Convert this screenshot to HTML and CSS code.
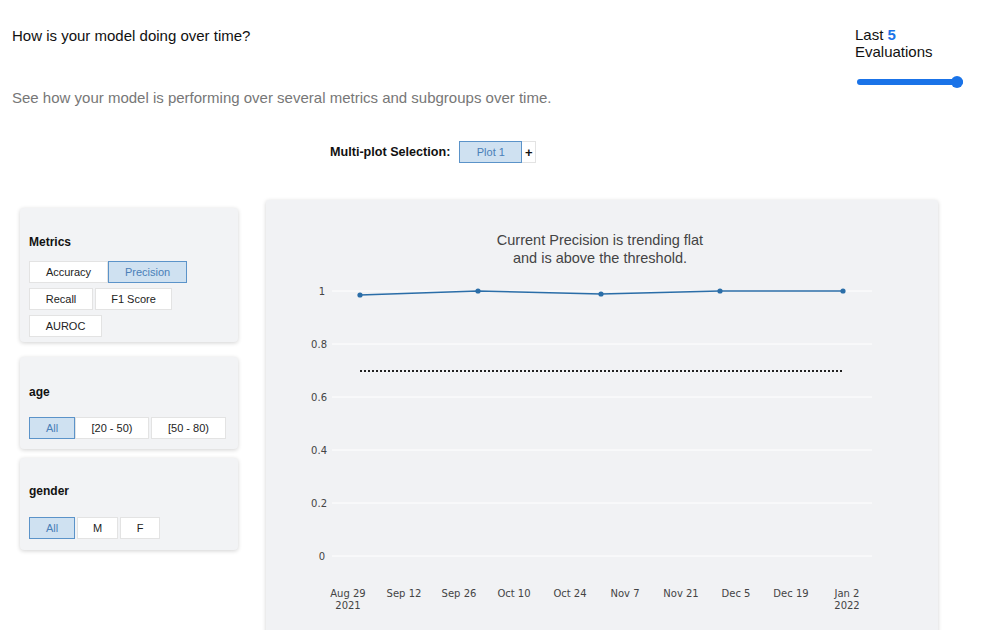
FILE: index.html
```html
<!DOCTYPE html>
<html>
<head>
<meta charset="utf-8">
<link rel="stylesheet" href="styles.css">
</head>
<body>
<div class="header">
  <div class="titles">
    <h1 class="title">How is your model doing over time?</h1>
    <p class="subtitle">See how your model is performing over several metrics and subgroups over time.</p>
  </div>
  <div class="evals">
    <div class="evals-label">Last <span class="num">5</span><br>Evaluations</div>
    <div class="slider"><div class="track"></div><div class="knob"></div></div>
  </div>
</div>
<div class="multiplot">
  <span class="mp-label">Multi-plot Selection:</span>
  <button class="btn sel plot">Plot 1</button><button class="btn plus">+</button>
</div>
<div class="main">
  <div class="side">
    <div class="card metrics">
      <div class="card-title">Metrics</div>
      <div class="btn-rows">
        <div class="row"><button class="btn w79">Accuracy</button><button class="btn sel w79">Precision</button></div>
        <div class="row gap2"><button class="btn w64">Recall</button><button class="btn w77">F1 Score</button></div>
        <div class="row"><button class="btn w73">AUROC</button></div>
      </div>
    </div>
    <div class="card group age">
      <div class="card-title">age</div>
      <div class="row"><button class="btn sel w46">All</button><button class="btn w74">[20 - 50)</button><button class="btn w75 ml2">[50 - 80)</button></div>
    </div>
    <div class="card group gender">
      <div class="card-title">gender</div>
      <div class="row"><button class="btn sel w46">All</button><button class="btn w41 ml2">M</button><button class="btn w40 ml2">F</button></div>
    </div>
  </div>
  <div class="chart">
    <svg width="672" height="430" viewBox="0 0 672 430">
      <text class="ctitle" x="334" y="45" text-anchor="middle">Current Precision is trending flat</text>
      <text class="ctitle" x="334" y="63" text-anchor="middle">and is above the threshold.</text>
      <g class="grid">
        <line x1="66" x2="606" y1="91" y2="91"/>
        <line x1="66" x2="606" y1="144" y2="144"/>
        <line x1="66" x2="606" y1="197" y2="197"/>
        <line x1="66" x2="606" y1="250" y2="250"/>
        <line x1="66" x2="606" y1="303" y2="303"/>
        <line x1="66" x2="606" y1="356" y2="356"/>
      </g>
      <g class="ylab" text-anchor="end">
        <text x="59" y="95">1</text>
        <text x="61" y="148">0.8</text>
        <text x="61" y="201">0.6</text>
        <text x="61" y="254">0.4</text>
        <text x="61" y="307">0.2</text>
        <text x="59" y="360">0</text>
      </g>
      <line class="thresh" x1="94" x2="577" y1="171" y2="171"/>
      <polyline class="series" points="94,95 212,91 335,94 454,91 577,91"/>
      <g class="pts">
        <circle cx="94" cy="95" r="2.6"/>
        <circle cx="212" cy="91" r="2.6"/>
        <circle cx="335" cy="94" r="2.6"/>
        <circle cx="454" cy="91" r="2.6"/>
        <circle cx="577" cy="91" r="2.6"/>
      </g>
      <g class="xlab" text-anchor="middle">
        <text x="82" y="397">Aug 29</text><text x="82" y="409">2021</text>
        <text x="138" y="397">Sep 12</text>
        <text x="193" y="397">Sep 26</text>
        <text x="248" y="397">Oct 10</text>
        <text x="304" y="397">Oct 24</text>
        <text x="359" y="397">Nov 7</text>
        <text x="415" y="397">Nov 21</text>
        <text x="470" y="397">Dec 5</text>
        <text x="525" y="397">Dec 19</text>
        <text x="581" y="397">Jan 2</text><text x="581" y="409">2022</text>
      </g>
    </svg>
  </div>
</div>
</body>
</html>
```
FILE: styles.css
```css
* { box-sizing: border-box; }
html, body { margin: 0; padding: 0; background: #fff; }
body {
  font-family: "Liberation Sans", Arial, sans-serif;
  color: #111;
  width: 1000px;
  height: 630px;
  overflow: hidden;
}
.header {
  display: flex;
  justify-content: space-between;
  padding: 0 36px 0 12px;
}
.title {
  margin: 27px 0 0 0;
  font-size: 15px;
  font-weight: normal;
  line-height: 17px;
  color: #111;
}
.subtitle {
  margin: 45px 0 0 0;
  font-size: 15px;
  line-height: 17px;
  color: #777;
}
.evals {
  width: 107px;
  padding-top: 26px;
}
.evals-label {
  font-size: 15px;
  line-height: 17px;
  color: #111;
  margin-left: -2px;
}
.num { color: #1a73e8; font-weight: bold; }
.slider {
  position: relative;
  margin-top: 16px;
  height: 12px;
  width: 106px;
}
.track {
  position: absolute;
  left: 0; right: 0; top: 3px;
  height: 6px;
  border-radius: 3px;
  background: #1a73e8;
}
.knob {
  position: absolute;
  right: 0; top: 0;
  width: 12px; height: 12px;
  border-radius: 50%;
  background: #1a73e8;
}
.multiplot {
  display: flex;
  align-items: center;
  margin-top: 35px;
  padding-left: 330px;
  height: 22px;
}
.mp-label {
  font-size: 12.6px;
  font-weight: bold;
  margin-right: 9px;
}
.btn {
  font-family: "Liberation Sans", Arial, sans-serif;
  font-size: 11px;
  color: #222;
  background: #fff;
  border: 1px solid #e3e3e3;
  height: 22px;
  padding: 0;
  margin: 0;
  text-align: center;
}
.btn.sel {
  background: #cfe1f1;
  border: 1px solid #5b93c9;
  color: #4a7fb8;
}
.btn.plot { width: 63px; height: 22px; }
.btn.plus { width: 14px; height: 22px; font-weight: bold; font-size: 13px; color: #111; border-left: none; }
.main {
  display: flex;
  align-items: flex-start;
  gap: 28px;
  padding-left: 20px;
  margin-top: 37px;
}
.side {
  width: 218px;
  margin-top: 8px;
  display: flex;
  flex-direction: column;
}
.card {
  background: #f2f3f5;
  border-radius: 4px;
  box-shadow: 0 1px 4px rgba(0,0,0,0.18);
  padding: 0 9px;
}
.card-title {
  font-size: 12px;
  font-weight: bold;
  color: #111;
  line-height: 14px;
}
.metrics { height: 134px; padding-top: 27px; }
.metrics .card-title { margin-bottom: 12px; }
.btn-rows { display: flex; flex-direction: column; gap: 5px; }
.row { display: flex; }
.gap2 .btn + .btn { margin-left: 2px; }
.group { padding-top: 26px; }
.group .card-title { margin-bottom: 19px; }
.age { height: 92px; margin-top: 15px; padding-top: 28px; }
.age .card-title { margin-bottom: 18px; }
.gender { height: 92px; margin-top: 9px; }
.ml2 { margin-left: 2px; }
.w79 { width: 79px; }
.w64 { width: 64px; }
.w77 { width: 77px; }
.w73 { width: 73px; }
.w46 { width: 46px; }
.w74 { width: 74px; }
.w75 { width: 75px; }
.w41 { width: 41px; }
.w40 { width: 40px; }
.chart {
  width: 672px;
  height: 440px;
  background: #f1f2f4;
  border-radius: 3px;
  box-shadow: 0 1px 4px rgba(0,0,0,0.18);
}
.chart svg { display: block; }
.ctitle {
  font-family: "Liberation Sans", Arial, sans-serif;
  font-size: 14.5px;
  fill: #444;
}
.grid line { stroke: #fff; stroke-width: 1; }
.ylab text, .xlab text {
  font-family: "DejaVu Sans", Verdana, sans-serif;
  font-size: 10px;
  fill: #444;
}
.thresh { stroke: #222; stroke-width: 2; stroke-dasharray: 2 2; }
.series { fill: none; stroke: #2b6ea8; stroke-width: 1.5; }
.pts circle { fill: #2b6ea8; }
```
